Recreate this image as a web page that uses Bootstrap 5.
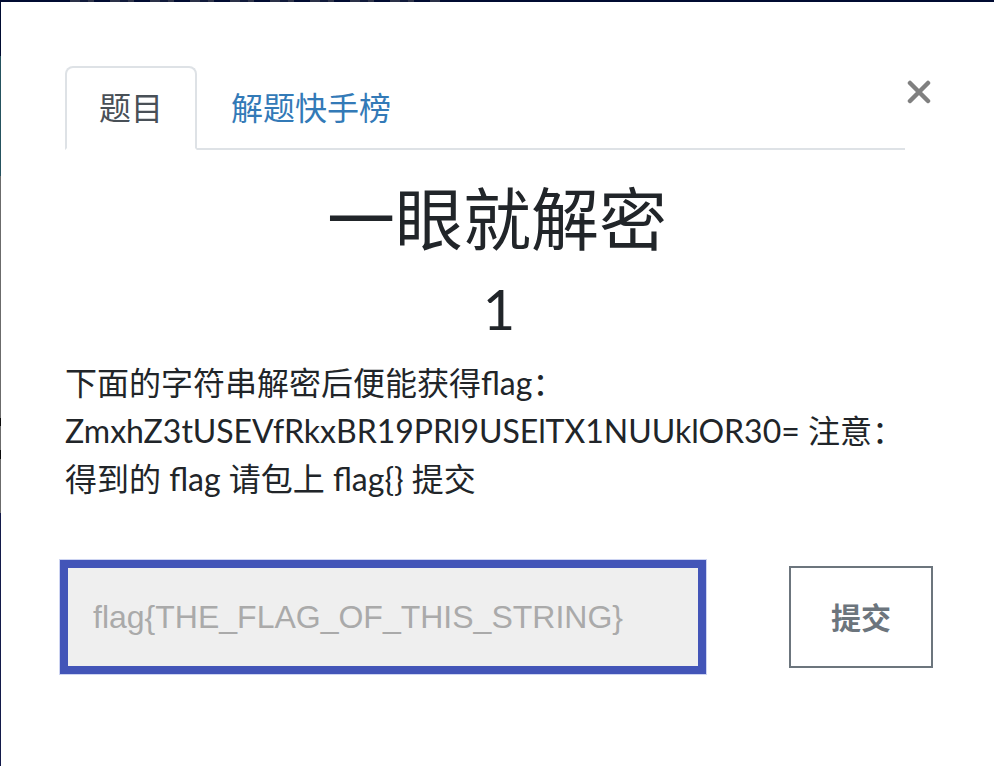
<!DOCTYPE html>
<html lang="zh-CN">
<head>
<meta charset="utf-8">
<meta name="viewport" content="width=device-width, initial-scale=1">
<title>一眼就解密</title>
<link rel="stylesheet" href="https://cdn.jsdelivr.net/npm/bootstrap@5.3.0/dist/css/bootstrap.min.css">
<style>
  body {
    font-family: Lato, "Noto Sans CJK SC", sans-serif;
    font-size: 32px;
    line-height: 48px;
    color: #212529;
    background: linear-gradient(#000b31 56px, #25525f 56px 176px, #6b6b6b 176px 418px, #0b0b0b 418px 426px, #6b6b6b 426px 450px, #0b0b0b 450px 459px, #6b6b6b 459px 513px, #131a4a 513px);
  }
  .backdrop-strip {
    height: 2px;
    background: repeating-linear-gradient(90deg, #2d3349 0 10px, #101a3b 10px 18px, #2d3349 18px 24px, #000b31 24px 40px) 70px 0 / 370px 2px no-repeat #000b31;
  }
  .challenge-panel { margin-left: 1px; padding: 64px 65px 64px 64px; }
  .nav-tabs { --bs-nav-tabs-border-width: 2px; --bs-nav-tabs-border-color: #dee2e6; --bs-nav-tabs-border-radius: 8px; --bs-nav-tabs-link-active-color: #495057; }
  .nav-tabs .nav-link { padding: 16px 32px; color: #337ab7; }
  .nav-tabs .nav-link.active { color: #495057; }
  .close-btn { width: 24px; height: 24px; margin: 14px -2px 0 2px; color: #808080; }
  .challenge-name { font-size: 68px; line-height: 80px; margin: 29px 0 16px; }
  .challenge-value { font-size: 56px; line-height: 68px; margin: 0 0 16px; padding-left: 4px; }
  .answer-form { gap: 82px; margin: 56px -4px 0 -6px; }
  .answer-input {
    height: 116px; padding: 0 25px;
    font-family: "Liberation Sans", Arial, sans-serif; font-size: 32px;
    background: #efefef; border: 9px solid #4355b8; outline: 1px solid #cdd4f2; outline-offset: -1px; min-width: 0;
  }
  .answer-input, .answer-input:focus { border-radius: 0; }
  .answer-input::placeholder { color: #aaa; opacity: 1; }
  .submit-btn { width: 144px; height: 102px; font-size: 30px; line-height: 48px; --bs-btn-border-width: 2px; --bs-btn-border-radius: 0; }
</style>
<script src="https://cdn.jsdelivr.net/npm/bootstrap@5.3.0/dist/js/bootstrap.bundle.min.js"></script>
</head>
<body class="min-vh-100 d-flex flex-column">
<div class="backdrop-strip"></div>
<main class="challenge-panel bg-white flex-grow-1">
  <header class="d-flex align-items-start">
    <ul class="nav nav-tabs flex-grow-1" role="tablist">
      <li class="nav-item"><a class="nav-link active" href="#challenge" role="tab" aria-selected="true">题目</a></li>
      <li class="nav-item"><a class="nav-link" href="#solves" role="tab" aria-selected="false">解题快手榜</a></li>
    </ul>
    <button type="button" class="close-btn btn p-0 border-0 d-flex flex-shrink-0" aria-label="关闭">
      <svg width="24" height="24" viewBox="0 0 24 24" fill="none" stroke="currentColor" stroke-width="4.5" stroke-linecap="round" aria-hidden="true"><path d="M3 3 21 21M21 3 3 21"/></svg>
    </button>
  </header>
  <section id="challenge">
    <h1 class="challenge-name text-center fw-normal">一眼就解密</h1>
    <h2 class="challenge-value text-center fw-normal">1</h2>
    <p class="mb-0">下面的字符串解密后便能获得flag：ZmxhZ3tUSEVfRkxBR19PRl9USElTX1NUUklOR30= 注意：得到的 flag 请包上 flag{} 提交</p>
    <form class="answer-form d-flex align-items-center">
      <input class="answer-input form-control flex-grow-1" type="text" aria-label="Flag" placeholder="flag{THE_FLAG_OF_THIS_STRING}">
      <button class="submit-btn btn btn-outline-secondary fw-bold flex-shrink-0" type="submit">提交</button>
    </form>
  </section>
</main>
</body>
</html>
